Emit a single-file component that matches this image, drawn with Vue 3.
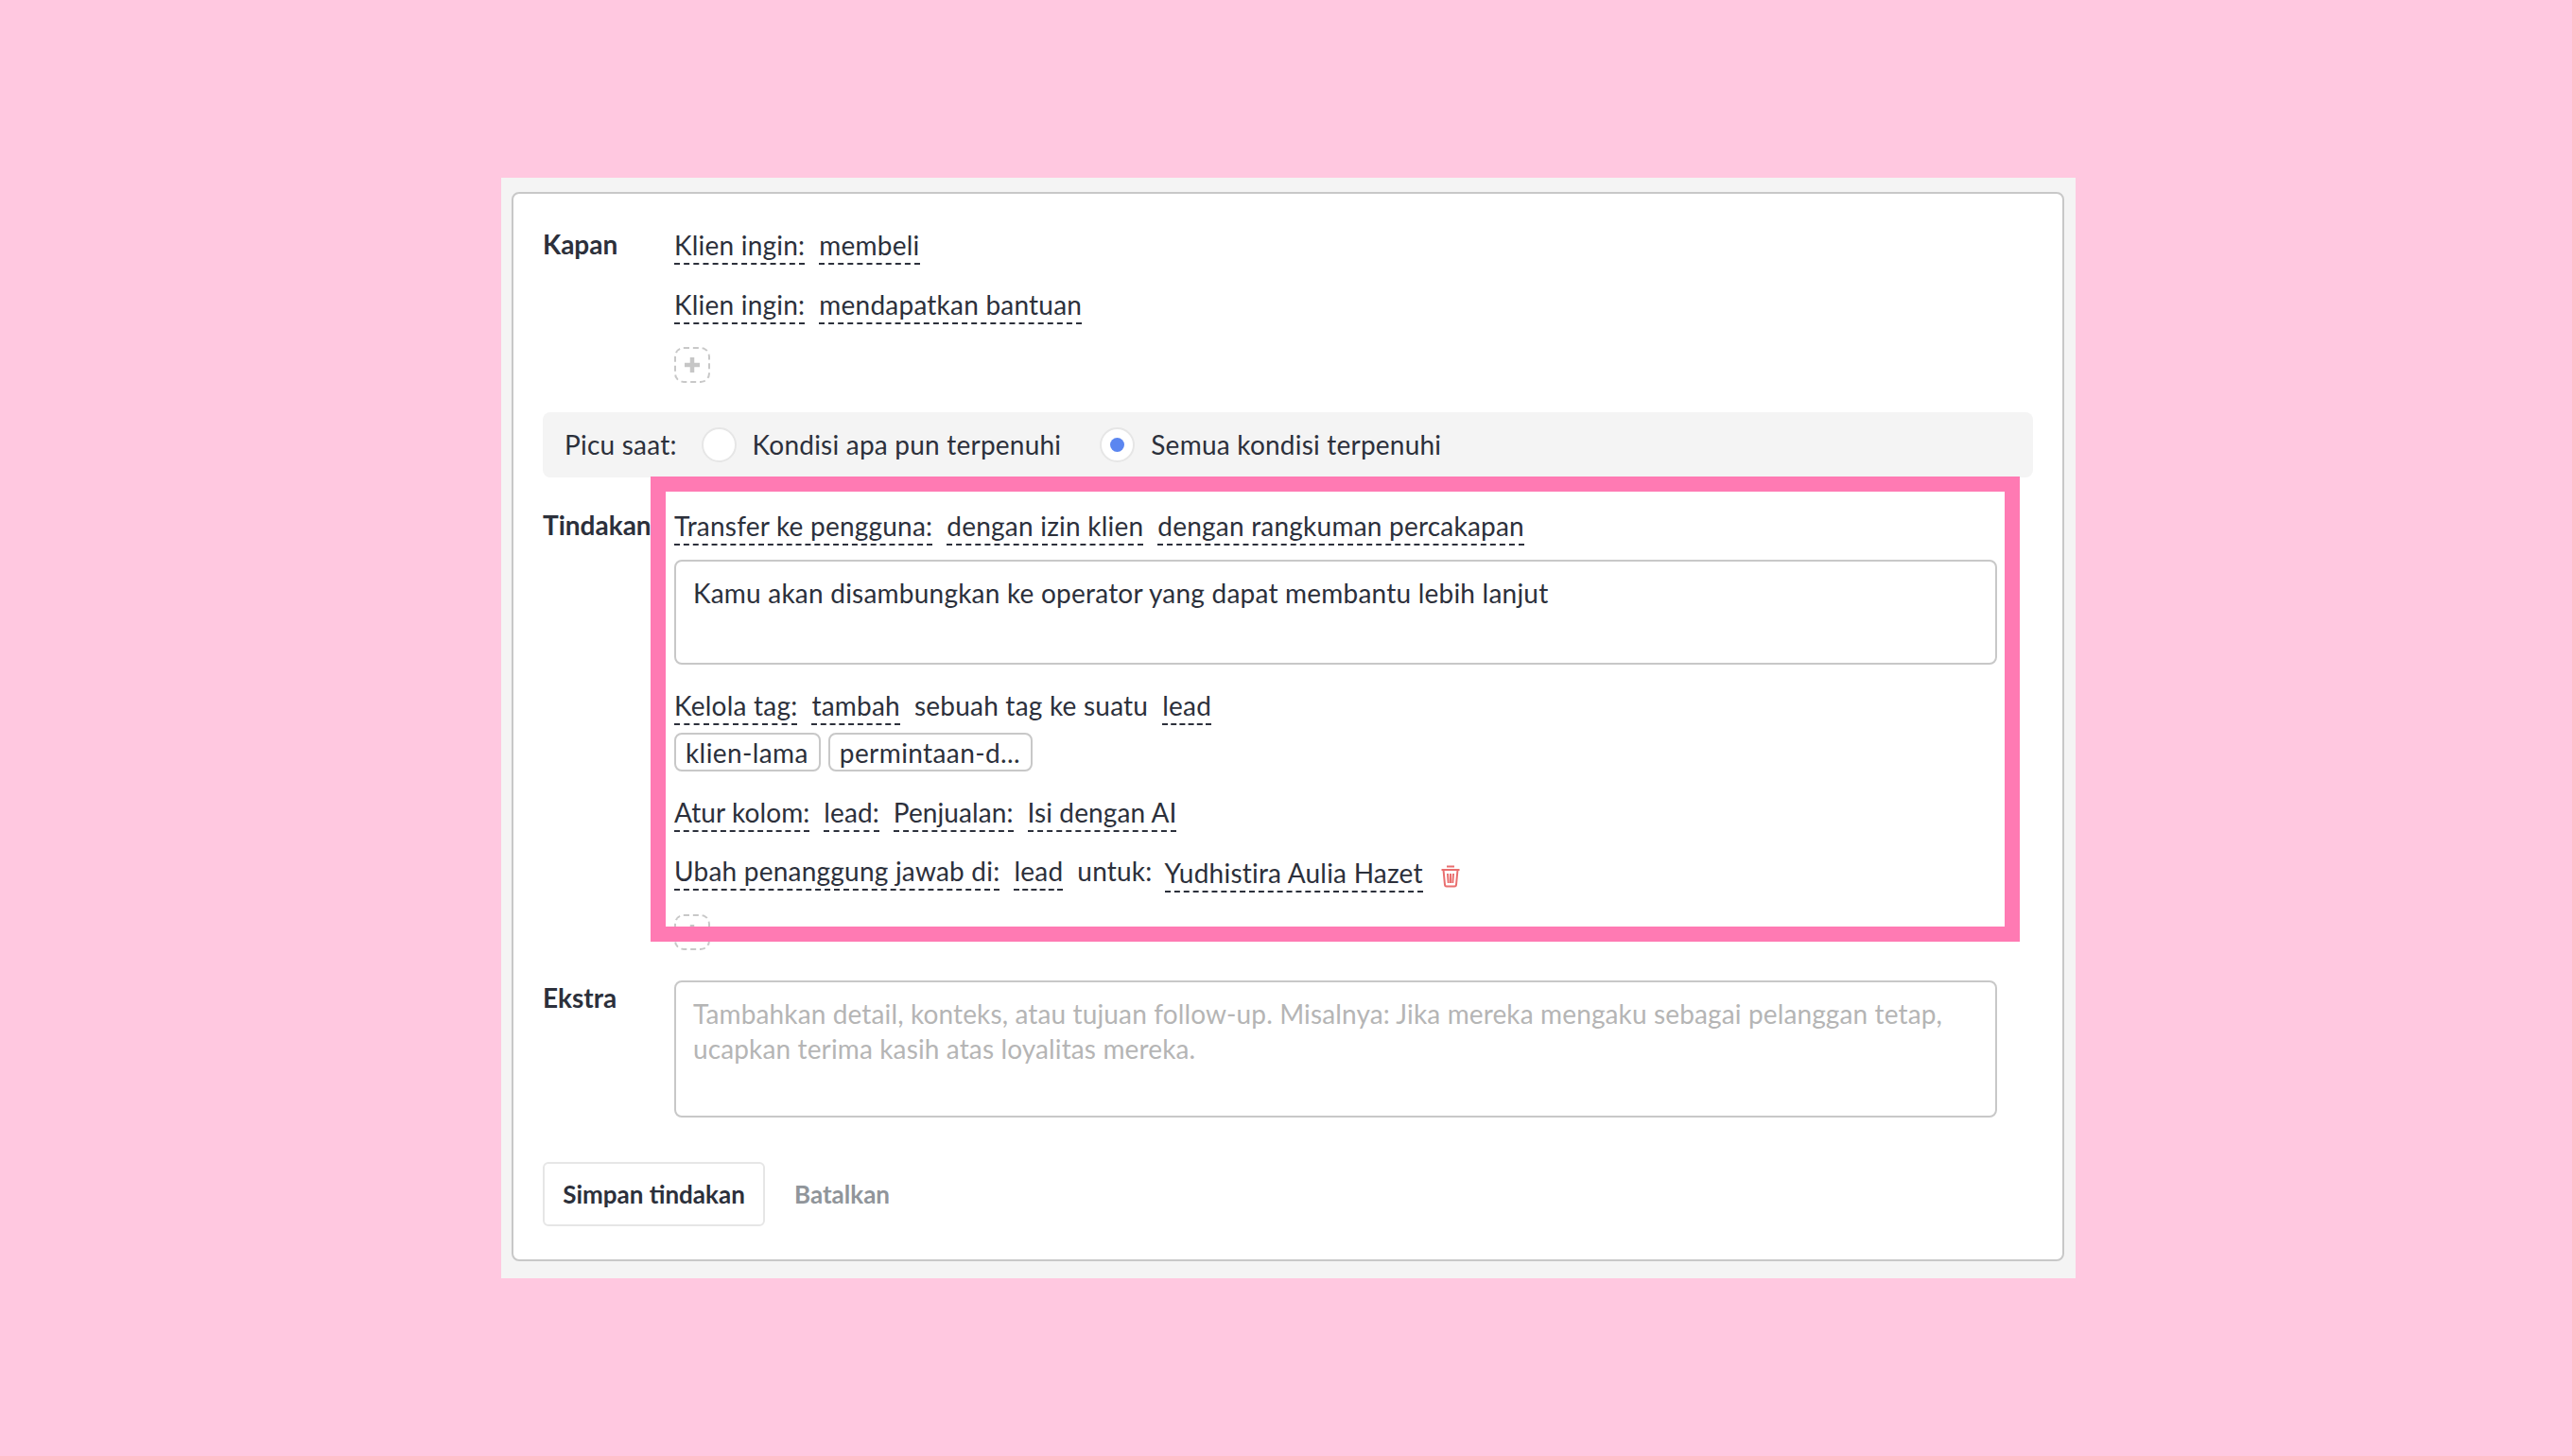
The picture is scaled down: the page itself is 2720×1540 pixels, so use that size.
<script setup>
const placeholder = 'Tambahkan detail, konteks, atau tujuan follow-up. Misalnya: Jika mereka mengaku sebagai pelanggan tetap, ucapkan terima kasih atas loyalitas mereka.'
</script>

<template>
  <div class="page">
    <div class="panel">
      <div class="card">
        <section class="section when">
          <div class="label">Kapan</div>
          <div class="content">
            <div class="clause"><span class="token">Klien ingin:</span><span class="token">membeli</span></div>
            <div class="clause"><span class="token">Klien ingin:</span><span class="token">mendapatkan bantuan</span></div>
            <button class="add" type="button" aria-label="Tambah">
              <svg width="18" height="18" viewBox="0 0 18 18"><path d="M9 1v16M1 9h16" stroke="#c6c6c6" stroke-width="4.500" fill="none" /></svg>
            </button>
          </div>
        </section>

        <div class="trigger">
          <span>Picu saat:</span>
          <span class="radio"></span>
          <span class="radio-text">Kondisi apa pun terpenuhi</span>
          <span class="radio on"><i></i></span>
          <span class="radio-text">Semua kondisi terpenuhi</span>
        </div>

        <section class="section then">
          <div class="label">Tindakan</div>
          <div class="content">
            <div class="clause tight"><span class="token">Transfer ke pengguna:</span><span class="token">dengan izin klien</span><span class="token">dengan rangkuman percakapan</span></div>
            <div class="field short">Kamu akan disambungkan ke operator yang dapat membantu lebih lanjut</div>
            <div class="clause tight-tags"><span class="token">Kelola tag:</span><span class="token">tambah</span><span class="plain">sebuah tag ke suatu</span><span class="token">lead</span></div>
            <div class="tags"><span class="tag">klien-lama</span><span class="tag">permintaan-d...</span></div>
            <div class="clause columns"><span class="token">Atur kolom:</span><span class="token">lead:</span><span class="token">Penjualan:</span><span class="token">Isi dengan AI</span></div>
            <div class="clause">
              <span class="token">Ubah penanggung jawab di:</span><span class="token">lead</span><span class="plain">untuk:</span><span class="token name">Yudhistira Aulia Hazet</span>
              <svg class="trash" width="20" height="24" viewBox="0 0 20 24" fill="none" stroke="#e96f6f" stroke-width="2">
                <path d="M6 1.500h8M.5 5h19M2.500 5l1.500 16q.2 1.500 1.700 1.500h8.600q1.500 0 1.700-1.500L17.500 5M7 9l.7 10M10 9v10M13 9l-.7 10" />
              </svg>
            </div>
            <button class="add" type="button" aria-label="Tambah">
              <svg width="18" height="18" viewBox="0 0 18 18"><path d="M9 1v16M1 9h16" stroke="#c6c6c6" stroke-width="4.500" fill="none" /></svg>
            </button>
          </div>
        </section>

        <section class="section extra">
          <div class="label">Ekstra</div>
          <div class="content">
            <div class="field tall">{{ placeholder }}</div>
          </div>
        </section>

        <div class="actions">
          <button class="save" type="button">Simpan tindakan</button>
          <button class="cancel" type="button">Batalkan</button>
        </div>
      </div>
    </div>
    <div class="highlight"></div>
  </div>
</template>

<style>
html, body { margin: 0; padding: 0; }
</style>

<style scoped>
.page {
  position: relative;
  box-sizing: border-box;
  width: 2720px;
  height: 1540px;
  padding: 188px 0 0 530px;
  background: #ffc8e0;
  font-family: "Lato", "Noto Sans", sans-serif;
  font-size: 28px;
  line-height: 33px;
  letter-spacing: 0.22px;
  color: #2c303b;
}
.panel {
  box-sizing: border-box;
  width: 1665px;
  height: 1164px;
  padding: 15px 12px 18px 11px;
  background: #f4f4f4;
}
.card {
  box-sizing: border-box;
  height: 1131px;
  padding: 37px 31px 35px;
  background: #fff;
  border: 2px solid #c8c8c8;
  border-radius: 8px;
}
.section {
  display: grid;
  grid-template-columns: 139px 1fr;
}
.label {
  font-weight: 700;
  letter-spacing: 0;
  white-space: nowrap;
  height: 36px;
}
.content {
  display: flex;
  flex-direction: column;
  align-items: flex-start;
  padding-right: 38px;
}
.clause {
  display: flex;
  align-items: flex-start;
  gap: 15px;
  height: 38px;
  margin-bottom: 25px;
  line-height: 34px;
  white-space: nowrap;
}
.clause.columns { letter-spacing: 0.09px; }
.token {
  display: block;
  height: 36px;
  border-bottom: 2px dashed #2c303b;
}
.clause .name {
  box-sizing: content-box;
  height: 36px;
  margin-left: -2px;
  padding-top: 2px;
}
.clause.tight { margin-bottom: 15px; }
.clause.tight-tags { margin-bottom: 8px; }
.when .clause:nth-child(2) { margin-bottom: 24px; }
.then .clause:nth-child(5) { margin-bottom: 24px; }
.add {
  display: flex;
  align-items: center;
  justify-content: center;
  box-sizing: border-box;
  width: 38px;
  height: 38px;
  padding: 0;
  background: #fff;
  border: 2px dashed #c8c8c8;
  border-radius: 10px;
}
.trash { margin-left: 4px; margin-top: 11px; }
.trigger {
  display: flex;
  align-items: center;
  box-sizing: border-box;
  height: 69px;
  margin: 31px 0 34px;
  padding-left: 23px;
  background: #f4f4f4;
  border-radius: 8px;
}
.radio {
  box-sizing: border-box;
  display: flex;
  align-items: center;
  justify-content: center;
  width: 37px;
  height: 37px;
  margin-left: 26px;
  background: #fff;
  border: 2px solid #e6e6e6;
  border-radius: 50%;
}
.radio.on { margin-left: 41px; }
.radio i {
  width: 15px;
  height: 15px;
  background: #5b86f0;
  border-radius: 50%;
}
.radio-text { margin-left: 17px; }
.field {
  box-sizing: border-box;
  width: 100%;
  padding: 15px 18px;
  background: #fff;
  border: 2px solid #c8c8c8;
  border-radius: 8px;
  line-height: 37px;
}
.field.short { height: 111px; margin-bottom: 26px; }
.field.tall {
  height: 145px;
  letter-spacing: 0.13px;
  color: #b5b5b5;
}
.extra { margin-top: 32px; }
.extra .label { margin-top: 2px; }
.tags {
  display: flex;
  gap: 8px;
  margin-bottom: 26px;
}
.tag {
  box-sizing: border-box;
  height: 41px;
  padding: 0 11px 0 10px;
  letter-spacing: 0.4px;
  line-height: 39px;
  border: 2px solid #c8c8c8;
  border-radius: 8px;
}
.actions {
  display: flex;
  align-items: center;
  gap: 31px;
  margin-top: 47px;
}
button { font: inherit; letter-spacing: 0; color: inherit; cursor: pointer; }
.save {
  box-sizing: border-box;
  width: 235px;
  height: 68px;
  padding: 0;
  font-size: 26px;
  font-weight: 700;
  background: #fff;
  border: 2px solid #e6e6e6;
  border-radius: 6px;
}
.cancel {
  padding: 0;
  font-size: 26px;
  font-weight: 700;
  color: #90959a;
  background: none;
  border: 0;
}
.highlight {
  position: absolute;
  left: 688px;
  top: 504px;
  box-sizing: border-box;
  width: 1448px;
  height: 492px;
  border: 16px solid #ff7ab3;
  pointer-events: none;
}
</style>
